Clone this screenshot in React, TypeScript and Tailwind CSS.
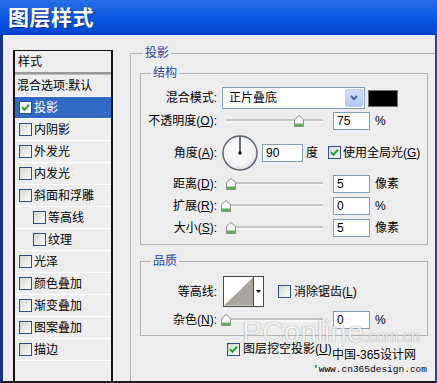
import React from "react";

function CheckBox({ checked = false, white = false }: { checked?: boolean; white?: boolean }) {
  return (
    <span
      className={
        "w-[13px] h-[13px] shrink-0 border border-[#2b4f7e] flex items-center justify-center " +
        (white ? "bg-white" : "bg-gradient-to-br from-[#d6d5cf] to-white")
      }
    >
      {checked && (
        <svg width="9" height="9" viewBox="0 0 9 9">
          <polyline points="1,4.3 3.4,6.8 8,1.6" fill="none" stroke="#21a121" strokeWidth="2" />
        </svg>
      )}
    </span>
  );
}

function Key({ text, k }: { text: string; k: string }) {
  return (
    <>
      {text}(<u>{k}</u>):
    </>
  );
}

function Field({ value, w = "w-[37px]" }: { value: string; w?: string }) {
  return (
    <div className={w + " h-[18px] shrink-0 bg-white border border-[#7f9db9] pl-[3px] leading-[16px]"}>{value}</div>
  );
}

function Slider({ value }: { value: number }) {
  return (
    <div className="relative w-[104px] h-full shrink-0">
      <div className="absolute left-[4px] right-[3px] top-1/2 -translate-y-1/2 h-[3px] border-t border-[#9d9d9d] border-b border-b-white" />
      <svg
        className="absolute top-1/2 -translate-y-1/2"
        style={{ left: 4 + (value / 100) * 97 - 5 }}
        width="10"
        height="12"
        viewBox="0 0 10 12"
      >
        <path d="M0.5 4.5 L5 0.5 L9.5 4.5 L9.5 11.5 L0.5 11.5 Z" fill="#f6f6f4" stroke="#879487" />
        <rect x="1" y="8.5" width="8" height="2.5" fill="#5cb05c" />
      </svg>
    </div>
  );
}

function Dial() {
  return (
    <svg width="36" height="36" viewBox="0 0 36 36" className="shrink-0">
      <defs>
        <radialGradient id="dg" cx="0.45" cy="0.4" r="0.6">
          <stop offset="0" stopColor="#ffffff" />
          <stop offset="0.8" stopColor="#f1f1f1" />
          <stop offset="1" stopColor="#d9dbe0" />
        </radialGradient>
      </defs>
      <circle cx="18" cy="18" r="17" fill="url(#dg)" stroke="#56606e" strokeWidth="1.4" />
      <line x1="18" y1="1.5" x2="18" y2="18" stroke="#111" strokeWidth="1.2" />
      <circle cx="18" cy="18" r="1.7" fill="#111" />
    </svg>
  );
}

function Contour() {
  return (
    <div className="flex h-[31px] border border-[#4a4a4a] shrink-0">
      <svg width="30" height="29" viewBox="0 0 30 29" className="border-r border-[#4a4a4a]">
        <rect width="30" height="29" fill="#ffffff" />
        <polygon points="0,29 30,0 30,29" fill="#aaa59a" />
      </svg>
      <div className="w-[9px] bg-white flex items-center justify-center">
        <svg width="5" height="3" viewBox="0 0 5 3">
          <polygon points="0,0 5,0 2.5,3" fill="#000" />
        </svg>
      </div>
    </div>
  );
}

const listItems: { name: string; indent?: boolean; checked?: boolean; selected?: boolean; plain?: boolean }[] = [
  { name: "混合选项:默认", plain: true },
  { name: "投影", checked: true, selected: true },
  { name: "内阴影" },
  { name: "外发光" },
  { name: "内发光" },
  { name: "斜面和浮雕" },
  { name: "等高线", indent: true },
  { name: "纹理", indent: true },
  { name: "光泽" },
  { name: "颜色叠加" },
  { name: "渐变叠加" },
  { name: "图案叠加" },
  { name: "描边" },
];

export default function App() {
  return (
    <div className="relative w-[437px] h-[383px] overflow-hidden flex flex-col text-[12px] text-black font-['Liberation_Sans','Noto_Sans_CJK_SC',sans-serif]">
      {/* title bar */}
      <div className="h-[35px] shrink-0 bg-gradient-to-b from-[#2a6fea] via-[#0857e3] to-[#0444cc] flex items-center pl-[8px]">
        <span className="text-white text-[21px] font-bold leading-none tracking-[0.5px] [text-shadow:1px_1px_0_#0b2d8a]">
          图层样式
        </span>
      </div>

      {/* body */}
      <div className="flex-1 min-h-0 flex bg-[#ededed] border-l-[3px] border-l-[#15337f] border-r-[2px] border-r-[#0a4bd0] border-b-[2px] border-b-[#1b1b1b] pl-[10px]">
        {/* left style list */}
        <div className="w-[100px] mt-[15px] shrink-0 border border-[#141414] border-l-2 border-r-2 border-b-0 flex flex-col">
          <div className="h-[21px] pl-[3px] flex items-center">样式</div>
          <div className="h-[3px] border-t-2 border-[#9a9a9a] border-b border-b-[#bdbdbd]" />
          {listItems.map((it) => (
            <div
              key={it.name}
              className={
                "h-[22px] border-b border-white flex items-center " +
                (it.selected ? "bg-[#316ac5] text-white " : "") +
                (it.plain ? "pl-[2px]" : it.indent ? "pl-[18px]" : "pl-[4px]")
              }
            >
              {!it.plain && <CheckBox checked={it.checked} white={it.selected} />}
              <span className={it.plain ? "" : "ml-[2px]"}>{it.name}</span>
            </div>
          ))}
        </div>

        {/* right settings */}
        <fieldset className="flex-1 ml-[17px] mt-[10px] border-t border-l border-[#b3b3b3] min-w-0">
          <legend className="ml-[12px] px-[2px] text-[#22479a] leading-[16px]">投影</legend>

          {/* 结构 */}
          <fieldset className="mt-[4px] ml-[9px] w-[288px] border border-[#b3b3b3] pb-[5px]">
            <legend className="ml-[10px] px-[2px] text-[#22479a] leading-[16px]">结构</legend>
            <div className="pt-[6px]">
              <div className="flex items-center h-[22px]">
                <div className="w-[76px] text-right">混合模式:</div>
                <div className="ml-[5px] w-[143px] h-[22px] bg-white border border-[#7f9db9] flex items-center justify-between pl-[6px] pr-[1px]">
                  <span>正片叠底</span>
                  <div className="w-[18px] h-[18px] rounded-[2px] bg-gradient-to-b from-[#d3e0fb] to-[#b3c8f5] border border-[#b8cdf6] flex items-center justify-center">
                    <svg width="8" height="6" viewBox="0 0 8 6">
                      <polyline points="1,1 4,4.2 7,1" fill="none" stroke="#4d6185" strokeWidth="2" />
                    </svg>
                  </div>
                </div>
                <div className="ml-[3px] w-[30px] h-[17px] bg-black border border-[#6f6f6f]" />
              </div>

              <div className="flex items-center h-[20px] mt-[2px]">
                <div className="w-[76px] text-right">
                  <Key text="不透明度" k="O" />
                </div>
                <div className="ml-[5px] h-full flex items-center">
                  <Slider value={75} />
                  <div className="ml-[7px]">
                    <Field value="75" />
                  </div>
                  <span className="ml-[5px]">%</span>
                </div>
              </div>

              <div className="flex items-center h-[37px] mt-[3px]">
                <div className="w-[76px] text-right">
                  <Key text="角度" k="A" />
                </div>
                <div className="ml-[5px] flex items-center">
                  <Dial />
                  <div className="ml-[4px]">
                    <Field value="90" w="w-[41px]" />
                  </div>
                  <span className="ml-[3px]">度</span>
                  <span className="ml-[10px] flex items-center">
                    <CheckBox checked />
                    <span className="ml-[2px]">
                      使用全局光(<u>G</u>)
                    </span>
                  </span>
                </div>
              </div>

              {[
                { t: "距离", k: "D", v: 5, unit: "像素" },
                { t: "扩展", k: "R", v: 0, unit: "%" },
                { t: "大小", k: "S", v: 5, unit: "像素" },
              ].map((r, i) => (
                <div key={r.t} className={"flex items-center h-[22px] " + (i === 0 ? "mt-[2px]" : "")}>
                  <div className="w-[76px] text-right">
                    <Key text={r.t} k={r.k} />
                  </div>
                  <div className="ml-[5px] h-full flex items-center">
                    <Slider value={r.v} />
                    <div className="ml-[7px]">
                      <Field value={String(r.v)} />
                    </div>
                    <span className="ml-[5px]">{r.unit}</span>
                  </div>
                </div>
              ))}
            </div>
          </fieldset>

          {/* 品质 */}
          <fieldset className="mt-[8px] ml-[9px] w-[288px] border border-[#b3b3b3] pb-[5px]">
            <legend className="ml-[10px] px-[2px] text-[#22479a] leading-[16px]">品质</legend>
            <div className="pt-[7px]">
              <div className="flex items-center h-[31px]">
                <div className="w-[76px] text-right">等高线:</div>
                <div className="ml-[6px] flex items-center">
                  <Contour />
                  <span className="ml-[14px] flex items-center">
                    <CheckBox />
                    <span className="ml-[3px]">
                      消除锯齿(<u>L</u>)
                    </span>
                  </span>
                </div>
              </div>
              <div className="flex items-center h-[20px] mt-[3px]">
                <div className="w-[76px] text-right">
                  <Key text="杂色" k="N" />
                </div>
                <div className="ml-[5px] h-full flex items-center">
                  <Slider value={0} />
                  <div className="ml-[7px]">
                    <Field value="0" />
                  </div>
                  <span className="ml-[5px]">%</span>
                </div>
              </div>
            </div>
          </fieldset>

          <div className="mt-[5px] h-[16px] pl-[96px] flex items-center">
            <CheckBox checked />
            <span className="ml-[3px] whitespace-nowrap">
              图层挖空投影(<u>U</u>)
            </span>
          </div>
        </fieldset>
      </div>

      {/* watermark overlay */}
      <div className="absolute left-[242px] top-[316px] flex items-baseline opacity-70 pointer-events-none whitespace-nowrap text-[#f4f4f4] [text-shadow:0_0_1px_#8c8c8c,0_0_1px_#8c8c8c]">
        <span className="text-[30px] leading-[32px]">PConline</span>
        <span className="text-[16px] leading-[18px]">.com.cn</span>
      </div>
      <div className="absolute left-[332px] top-[348px] text-[12px] leading-[14px] whitespace-nowrap text-black [text-shadow:0_0_2px_#ffffff]">
        中国-365设计网
      </div>
      <div className="absolute left-[313px] top-[364px] text-[9.5px] leading-[11px] whitespace-nowrap text-black font-['Liberation_Mono',monospace]">
        'www.cn365design.com
      </div>
    </div>
  );
}
